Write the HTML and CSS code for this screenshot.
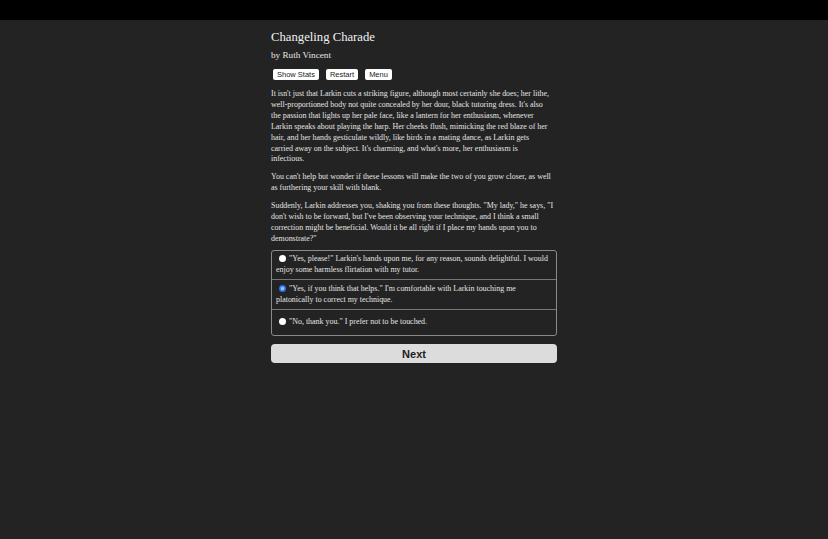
FILE: index.html
```html
<!DOCTYPE html>
<html>
<head>
<meta charset="utf-8">
<title>Changeling Charade</title>
<link rel="stylesheet" href="styles.css">
</head>
<body>
<div class="topbar"></div>
<div class="main">
  <h1 class="title">Changeling Charade</h1>
  <div class="author">by Ruth Vincent</div>
  <div class="buttons">
    <button class="btn">Show Stats</button>
    <button class="btn">Restart</button>
    <button class="btn">Menu</button>
  </div>
  <div class="text">
    <p>It isn't just that Larkin cuts a striking figure, although most certainly she does; her lithe,<br>well-proportioned body not quite concealed by her dour, black tutoring dress. It's also<br>the passion that lights up her pale face, like a lantern for her enthusiasm, whenever<br>Larkin speaks about playing the harp. Her cheeks flush, mimicking the red blaze of her<br>hair, and her hands gesticulate wildly, like birds in a mating dance, as Larkin gets<br>carried away on the subject. It's charming, and what's more, her enthusiasm is<br>infectious.</p>
    <p>You can't help but wonder if these lessons will make the two of you grow closer, as well<br>as furthering your skill with blank.</p>
    <p>Suddenly, Larkin addresses you, shaking you from these thoughts. "My lady," he says, "I<br>don't wish to be forward, but I've been observing your technique, and I think a small<br>correction might be beneficial. Would it be all right if I place my hands upon you to<br>demonstrate?"</p>
  </div>
  <div class="choices">
    <label class="choice"><span class="radio"></span>"Yes, please!" Larkin's hands upon me, for any reason, sounds delightful. I would<br>enjoy some harmless flirtation with my tutor.</label>
    <label class="choice"><span class="radio checked"></span>"Yes, if you think that helps." I'm comfortable with Larkin touching me<br>platonically to correct my technique.</label>
    <label class="choice single"><span class="radio"></span>"No, thank you." I prefer not to be touched.</label>
  </div>
  <button class="next">Next</button>
</div>
</body>
</html>
```
FILE: styles.css
```css
html, body {
  margin: 0;
  padding: 0;
  background: #232323;
  height: 100%;
}
body {
  font-family: "Liberation Serif", "Times New Roman", serif;
  color: #e4e4e4;
}
.topbar {
  height: 20px;
  background: #000;
}
.main {
  width: 286px;
  margin: 0 auto;
  padding-top: 9px;
}
.title {
  font-size: 12.7px;
  font-weight: normal;
  margin: 0;
  line-height: 16px;
  color: #f0f0f0;
}
.author {
  font-size: 9.2px;
  line-height: 12px;
  margin-top: 4px;
}
.buttons {
  display: flex;
  gap: 7px;
  margin-top: 8px;
  padding-left: 2px;
}
.btn {
  font-family: "Liberation Sans", Arial, sans-serif;
  font-size: 7.5px;
  line-height: 9px;
  height: 11px;
  padding: 0 4px;
  border: none;
  border-radius: 2px;
  background: #fff;
  color: #222;
  margin: 0;
}
.text {
  margin-top: 9px;
  font-size: 7.95px;
  line-height: 10.9px;
}
.text p {
  margin: 0 0 7px 0;
}
.text p:last-child {
  margin-bottom: 0;
}
.choices {
  margin-top: 5px;
  border: 1px solid #8a8a8a;
  border-radius: 3px;
  font-size: 7.95px;
  line-height: 10.8px;
}
.choice {
  display: block;
  padding: 3.5px 4px;
  border-top: 1px solid #777;
}
.choice:first-child {
  border-top: none;
}
.choice.single {
  padding: 7.5px 4px 7px 4px;
}
.radio {
  display: inline-block;
  width: 7px;
  height: 7px;
  border-radius: 50%;
  background: #fff;
  margin: 0 3px 0 3px;
  vertical-align: -1px;
}
.radio.checked {
  background: radial-gradient(circle, #9cc4ff 0 1.2px, #3b82f6 2px 2.6px, #2b6fe0 3px);
}
.next {
  display: block;
  width: 286px;
  height: 19px;
  margin-top: 8px;
  border: none;
  border-radius: 4px;
  background: #dcdcdc;
  color: #222;
  font-family: "Liberation Sans", Arial, sans-serif;
  font-weight: bold;
  font-size: 11px;
  padding: 0;
}
```
